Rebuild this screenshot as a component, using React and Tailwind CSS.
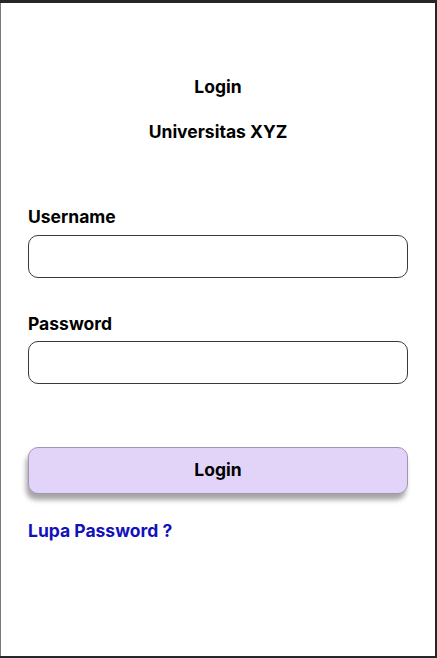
import React from 'react';

const App = () => {
  return (
    <div className="h-[658px] w-[437px] bg-[#262626] pt-[3px] pb-[2px] pr-[2px] font-['Inter',sans-serif]">
      <div className="h-full border-l border-[#7a7a7a] bg-white px-[27px]">
        <div className="flex flex-col items-center pt-[73px]">
          <h1 className="text-[17.5px] font-bold leading-[22px] text-black">Login</h1>
          <h2 className="mt-[23px] text-[17.5px] font-bold leading-[22px] text-black">Universitas XYZ</h2>
        </div>

        <div className="mt-[63px]">
          <label className="block text-[17.5px] font-bold leading-[22px] text-black">Username</label>
          <input
            type="text"
            className="mt-[7px] block h-[43px] w-full rounded-[10px] border border-[#3a3a3a] bg-white px-3 outline-none"
          />
        </div>

        <div className="mt-[35px]">
          <label className="block text-[17.5px] font-bold leading-[22px] text-black">Password</label>
          <input
            type="password"
            className="mt-[6px] block h-[43px] w-full rounded-[10px] border border-[#3a3a3a] bg-white px-3 outline-none"
          />
        </div>

        <button
          type="button"
          className="mt-[63px] block h-[47px] w-full rounded-[10px] border border-[#a394b6] bg-[#e2d4f9] text-[17.5px] font-bold text-black shadow-[-2px_6px_5px_rgba(0,0,0,0.35)]"
        >
          Login
        </button>

        <a href="#" className="mt-[26px] block text-[17.5px] font-bold leading-[22px] text-[#1212bc]">
          Lupa Password ?
        </a>
      </div>
    </div>
  );
};

export default App;
